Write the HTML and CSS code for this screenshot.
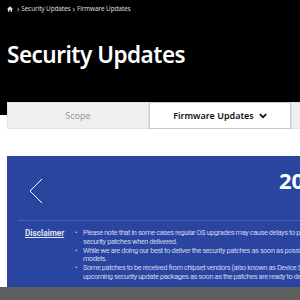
FILE: index.html
```html
<!DOCTYPE html>
<html lang="en">
<head>
  <meta charset="UTF-8" />
  <title>Security Updates</title>
  <link rel="stylesheet" href="styles.css">
</head>
<body>
  <header class="top">
    <nav class="crumbs">
      <svg class="home" width="6" height="6" viewBox="0 0 10 10"><path d="M5 0.5 L0 5 H1.5 V9.5 H4 V6.5 H6 V9.5 H8.5 V5 H10 Z" fill="#ddd"/></svg>
      <span class="sep">›</span><span>Security Updates</span>
      <span class="sep">›</span><span>Firmware Updates</span>
    </nav>
    <h1>Security Updates</h1>
  </header>

  <div class="tabs">
    <div class="tab">Scope</div>
    <div class="tab active">Firmware Updates
      <svg width="8" height="6" viewBox="0 0 10 7"><path d="M1 1.2 L5 5 L9 1.2" fill="none" stroke="#111" stroke-width="2.2"/></svg>
    </div>
    <div class="tab">Bulletins</div>
  </div>

  <section class="panel">
    <div class="panel-head">
      <svg class="prev" width="14" height="26" viewBox="0 0 14 26"><path d="M13 1 L1 13 L13 25" fill="none" stroke="#fff" stroke-width="1"/></svg>
      <h2>2024</h2>
    </div>
    <div class="disclaimer">
      <a class="label">Disclaimer</a>
      <ul>
        <li>Please note that in some cases regular OS upgrades may cause delays to previously scheduled security updates.<br>security patches when delivered.</li>
        <li>While we are doing our best to deliver the security patches as soon as possible, there may be delays for some<br>models.</li>
        <li>Some patches to be received from chipset vendors (also known as Device Specific patches) may not be included.<br>upcoming security update packages as soon as the patches are ready to deliver.</li>
      </ul>
    </div>
  </section>
  <footer class="bottom"></footer>
</body>
</html>
```

FILE: styles.css
```css
body { margin: 0; width: 300px; height: 300px; overflow: hidden; font-family: "Noto Sans", "Open Sans", sans-serif; background-color: #ffffff; }
.top { height: 115px; background-color: #000; color: #fff; padding: 0 7px; box-sizing: border-box; }
.crumbs { display: flex; align-items: center; gap: 2px; height: 17px; font-size: 6.5px; letter-spacing: -0.15px; color: #d8d8d8; }
.crumbs .home { margin-right: 2px; }
.crumbs .sep { font-size: 8px; padding: 0; }
.top h1 { margin: 23px 0 0; font-size: 22.5px; font-weight: 600; letter-spacing: -0.5px; line-height: 30px; }
.tabs { display: flex; margin: -13px 0 0 7px; height: 27px; }
.tab { flex: 0 0 142px; display: flex; align-items: center; justify-content: center; gap: 5px; background-color: #efefef; color: #9a9a9a; font-size: 9px; box-sizing: border-box; border: 1px solid #e2e2e2; }
.tab.active { background-color: #fff; color: #111; font-weight: 600; border-color: #c8c8c8; }
.panel { margin: 27px 0 0 7px; height: 131px; background-color: #2a459f; color: #fff; white-space: nowrap; }
.panel-head { display: flex; align-items: flex-start; height: 65px; box-sizing: border-box; padding: 22px 0 0 11px; border-bottom: 1px solid #4861ad; margin-left: 11px; }
.panel-head .prev { flex: 0 0 14px; }
.panel-head h2 { margin: -13px 0 0 236px; font-size: 22px; font-weight: 700; }
.disclaimer { display: flex; padding: 8px 0 0 18px; font-family: Roboto, "Noto Sans", sans-serif; font-size: 7.4px; line-height: 8.8px; letter-spacing: -0.4px; color: #ccd4ee; }
.disclaimer .label { color: #dde3f5; font-size: 8.2px; font-weight: 700; letter-spacing: 0; text-decoration: underline; flex: 0 0 49px; }
.disclaimer ul { margin: 0; padding: 0 0 0 9px; list-style: none; }
.disclaimer li { position: relative; }
.disclaimer li::before { content: "•"; position: absolute; left: -8px; }
.bottom { height: 20px; background-color: #5e5e5e; }
```
